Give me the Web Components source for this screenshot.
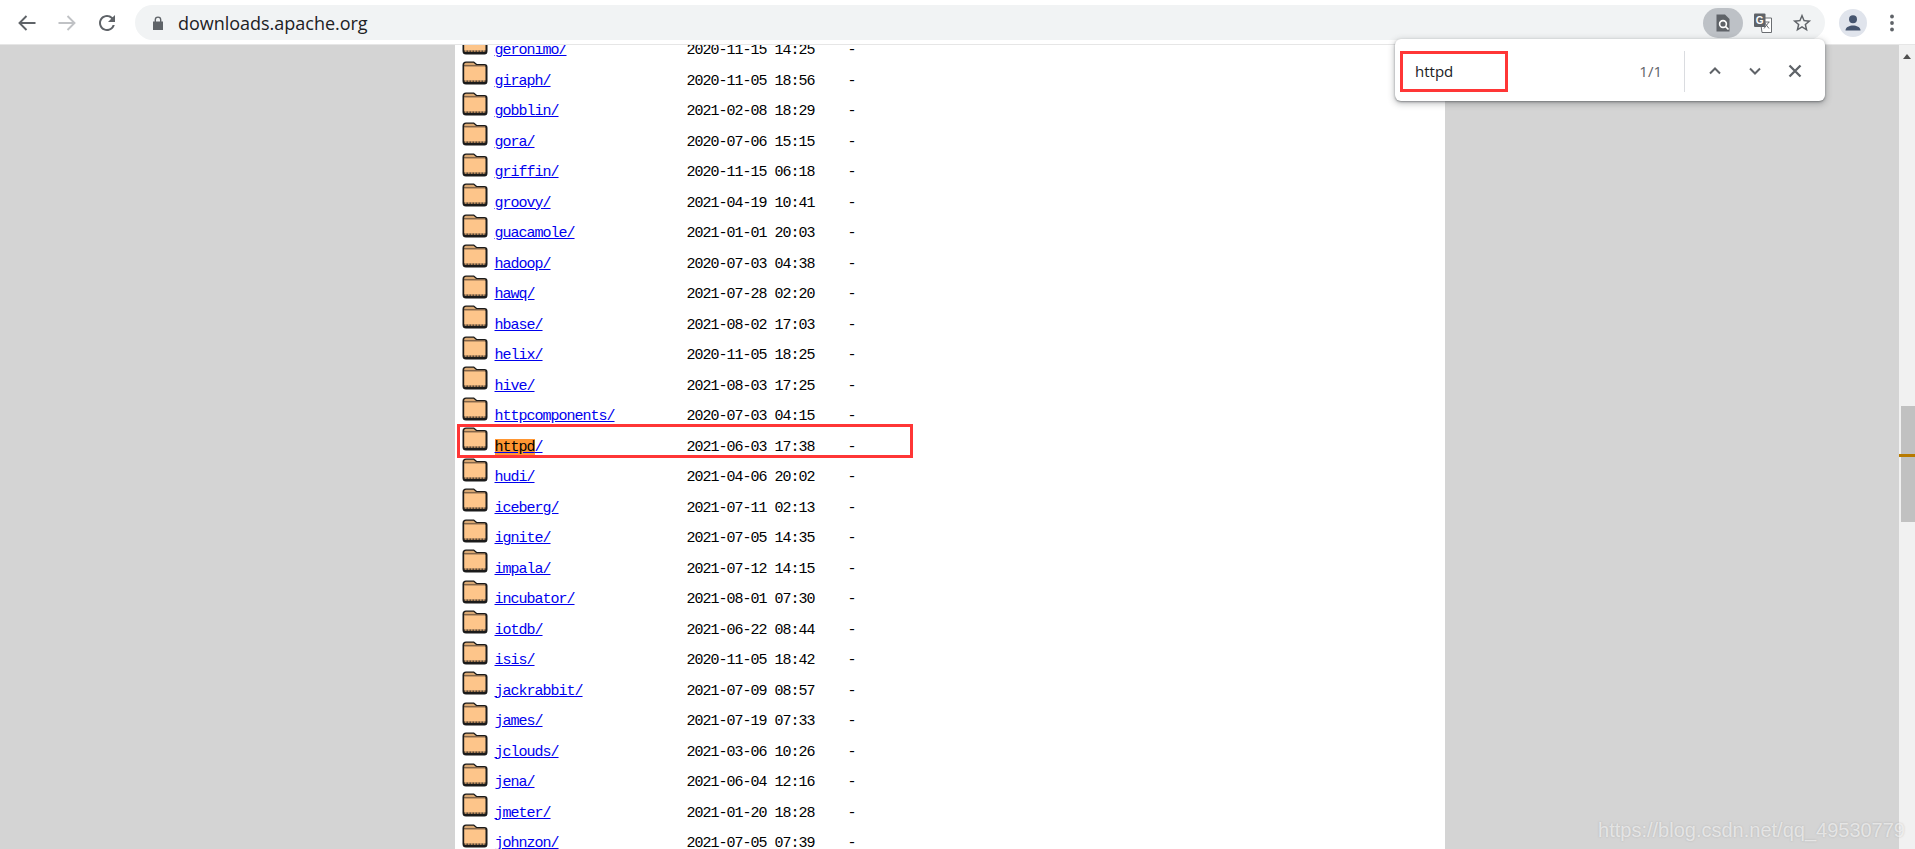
<!DOCTYPE html>
<html>
<head>
<meta charset="utf-8">
<title>downloads.apache.org</title>
<style>
  html, body { margin: 0; height: 100%; overflow: hidden; background: #d4d4d4; }
  body { font-family: "Open Sans", "Liberation Sans", sans-serif; }
</style>
</head>
<body>
<browser-window>
  <browser-toolbar slot="toolbar" url="downloads.apache.org"></browser-toolbar>
  <find-bar slot="overlay" query="httpd" count="1/1"></find-bar>
  <dir-listing slot="page">
    <dir-row name="geronimo/" date="2020-11-15 14:25"></dir-row>
    <dir-row name="giraph/" date="2020-11-05 18:56"></dir-row>
    <dir-row name="gobblin/" date="2021-02-08 18:29"></dir-row>
    <dir-row name="gora/" date="2020-07-06 15:15"></dir-row>
    <dir-row name="griffin/" date="2020-11-15 06:18"></dir-row>
    <dir-row name="groovy/" date="2021-04-19 10:41"></dir-row>
    <dir-row name="guacamole/" date="2021-01-01 20:03"></dir-row>
    <dir-row name="hadoop/" date="2020-07-03 04:38"></dir-row>
    <dir-row name="hawq/" date="2021-07-28 02:20"></dir-row>
    <dir-row name="hbase/" date="2021-08-02 17:03"></dir-row>
    <dir-row name="helix/" date="2020-11-05 18:25"></dir-row>
    <dir-row name="hive/" date="2021-08-03 17:25"></dir-row>
    <dir-row name="httpcomponents/" date="2020-07-03 04:15"></dir-row>
    <dir-row name="httpd/" match="httpd" boxed date="2021-06-03 17:38"></dir-row>
    <dir-row name="hudi/" date="2021-04-06 20:02"></dir-row>
    <dir-row name="iceberg/" date="2021-07-11 02:13"></dir-row>
    <dir-row name="ignite/" date="2021-07-05 14:35"></dir-row>
    <dir-row name="impala/" date="2021-07-12 14:15"></dir-row>
    <dir-row name="incubator/" date="2021-08-01 07:30"></dir-row>
    <dir-row name="iotdb/" date="2021-06-22 08:44"></dir-row>
    <dir-row name="isis/" date="2020-11-05 18:42"></dir-row>
    <dir-row name="jackrabbit/" date="2021-07-09 08:57"></dir-row>
    <dir-row name="james/" date="2021-07-19 07:33"></dir-row>
    <dir-row name="jclouds/" date="2021-03-06 10:26"></dir-row>
    <dir-row name="jena/" date="2021-06-04 12:16"></dir-row>
    <dir-row name="jmeter/" date="2021-01-20 18:28"></dir-row>
    <dir-row name="johnzon/" date="2021-07-05 07:39"></dir-row>
  </dir-listing>
  <page-scrollbar slot="scrollbar"></page-scrollbar>
  <span slot="overlay" class="mark">https://blog.csdn.net/qq_49530779</span>
</browser-window>

<script>
class BrowserWindow extends HTMLElement {
  constructor() {
    super();
    this.attachShadow({ mode: 'open' });
    this.shadowRoot.innerHTML = `
      <style>
        :host {
          display: grid;
          grid-template-rows: 45px 1fr;
          height: 849px;
          width: 1915px;
          position: relative;
          overflow: hidden;
        }
        .view {
          display: grid;
          grid-template-columns: 1fr 990px 1fr 16px;
          overflow: hidden;
          background: #d4d4d4;
        }
        .page { grid-column: 2; overflow: hidden; background: #fff; }
        .bar { grid-column: 4; }
        ::slotted(.mark) {
          position: absolute;
          right: 10px;
          bottom: 7px;
          font: 20px "Liberation Sans", Arial, sans-serif;
          color: rgba(255, 255, 255, .6);
          text-shadow: 0 0 2px rgba(130, 130, 130, .4);
        }
      </style>
      <slot name="toolbar"></slot>
      <div class="view">
        <div class="page"><slot name="page"></slot></div>
        <div class="bar"><slot name="scrollbar"></slot></div>
      </div>
      <slot name="overlay"></slot>
    `;
  }
}

class BrowserToolbar extends HTMLElement {
  constructor() {
    super();
    this.attachShadow({ mode: 'open' });
  }

  connectedCallback() {
    this.render();
  }

  render() {
    const url = this.getAttribute('url') || '';

    this.shadowRoot.innerHTML = `
      <style>
        :host {
          display: flex;
          height: 45px;
          box-sizing: border-box;
          padding: 5px 4px 0 7px;
          background: #fff;
          align-items: flex-start;
          border-bottom: 1px solid #e6e6e6;
        }
        .btn {
          flex: none;
          width: 40px;
          height: 35px;
          display: flex;
          align-items: center;
          justify-content: center;
        }
        .btn.thin { width: 38px; }
        .omni {
          flex: 1;
          height: 35px;
          margin: 0 8px;
          display: flex;
          align-items: center;
          background: #f1f3f4;
          border-radius: 18px;
          padding: 0 4px 0 15px;
          box-sizing: border-box;
        }
        .url {
          margin-left: 12px;
          font: 18px "Open Sans", "Liberation Sans", sans-serif;
          letter-spacing: -.02px;
          color: #202124;
        }
        .right { margin-left: auto; display: flex; align-items: center; }
        .pill {
          width: 40px;
          height: 30px;
          border-radius: 15px;
          background: #bdc1c6;
          display: flex;
          align-items: center;
          justify-content: center;
        }
        .avatar {
          width: 28px;
          height: 28px;
          border-radius: 50%;
          background: #e0e4ec;
          display: flex;
          align-items: center;
          justify-content: center;
        }
      </style>
      <div class="btn">
        <svg width="24" height="24" viewBox="0 0 24 24" fill="none" stroke="#5f6368" stroke-width="1.9"><path d="M20.5 12H4.5M11.5 5l-7 7 7 7"/></svg>
      </div>
      <div class="btn">
        <svg width="24" height="24" viewBox="0 0 24 24" fill="none" stroke="#c0c2c5" stroke-width="1.9"><path d="M3.5 12h16M12.5 5l7 7-7 7"/></svg>
      </div>
      <div class="btn">
        <svg width="24" height="24" viewBox="0 0 24 24" fill="#5f6368"><path d="M17.65 6.35A7.958 7.958 0 0 0 12 4c-4.42 0-7.99 3.58-7.99 8s3.57 8 7.99 8c3.73 0 6.84-2.55 7.73-6h-2.08A5.99 5.99 0 0 1 12 18c-3.31 0-6-2.69-6-6s2.69-6 6-6c1.66 0 3.14.69 4.22 1.78L13 11h7V4l-2.35 2.35z"/></svg>
      </div>
      <div class="omni">
        <svg width="16" height="16" viewBox="0 0 16 16" fill="#5f6368"><path d="M3 6.500h1.600V4.800a3.400 3.400 0 0 1 6.800 0v1.700H13V15H3zM6 6.500h4V4.800a2 2 0 0 0-4 0z" fill-rule="evenodd"/></svg>
        <span class="url">${url}</span>
        <div class="right">
          <div class="pill">
            <svg width="20" height="20" viewBox="0 0 20 20"><path d="M3.500 1.500h8.500l4.500 4.500v12.500h-13z" fill="#5f6368"/><circle cx="10" cy="11" r="3.400" fill="none" stroke="#fff" stroke-width="1.600"/><path d="M12.500 13.500l3 3" stroke="#fff" stroke-width="1.700"/></svg>
          </div>
          <div class="btn">
            <svg width="20" height="20" viewBox="0 0 20 20">
              <path d="M7 5h11.500v14.500H9z" fill="#fff" stroke="#6b6e72" stroke-width="1"/>
              <path d="M11 9l5 6.500M16 9l-5 6.500M10.500 9h6" stroke="#6b6e72" stroke-width="1" fill="none"/>
              <rect x="1" y="0.500" width="11.500" height="13.500" rx="1" fill="#5f6368"/>
              <text x="6.700" y="11" font-family="Liberation Sans, sans-serif" font-size="10" font-weight="700" fill="#fff" text-anchor="middle">G</text>
            </svg>
          </div>
          <div class="btn thin">
            <svg width="22" height="22" viewBox="0 0 24 24" fill="#5f6368"><path d="M22 9.240l-7.190-.620L12 2 9.190 8.630 2 9.240l5.460 4.730L5.820 21 12 17.270 18.180 21l-1.630-7.030L22 9.240zM12 15.400l-3.760 2.270 1-4.280-3.320-2.880 4.380-.380L12 6.100l1.710 4.040 4.380.380-3.320 2.880 1 4.280L12 15.400z"/></svg>
          </div>
        </div>
      </div>
      <div class="btn">
        <div class="avatar">
          <svg width="20" height="20" viewBox="0 0 20 20" fill="#46556f"><circle cx="10" cy="6.200" r="4"/><path d="M2.500 17.500c0-3.600 4.200-5 7.500-5s7.500 1.400 7.500 5z"/></svg>
        </div>
      </div>
      <div class="btn thin">
        <svg width="6" height="18" viewBox="0 0 6 18" fill="#5f6368"><circle cx="3" cy="2.500" r="1.900"/><circle cx="3" cy="9" r="1.900"/><circle cx="3" cy="15.500" r="1.900"/></svg>
      </div>
    `;
  }
}

class FindBar extends HTMLElement {
  constructor() {
    super();
    this.attachShadow({ mode: 'open' });
  }

  connectedCallback() {
    this.render();
  }

  render() {
    const query = this.getAttribute('query') || '';
    const count = this.getAttribute('count') || '';

    this.shadowRoot.innerHTML = `
      <style>
        :host {
          position: absolute;
          top: 39px;
          right: 90px;
          width: 430px;
          height: 62px;
          box-sizing: border-box;
          display: flex;
          align-items: center;
          padding: 2px 10px 0 5px;
          background: #fff;
          border-radius: 6px;
          box-shadow: 0 1px 2px rgba(60, 64, 67, .5), 0 2px 6px 1px rgba(60, 64, 67, .3);
          font: 15px "Open Sans", "Liberation Sans", sans-serif;
        }
        .query {
          width: 108px;
          height: 41px;
          box-sizing: border-box;
          border: 3px solid #ff3636;
          padding-left: 12px;
          line-height: 35px;
          color: #202124;
        }
        .count { margin-left: auto; margin-right: 1px; color: #5f6368; font-size: 15px; }
        .sep { width: 1px; height: 41px; background: #dadce0; margin: 0 10px 0 21px; }
        .btn {
          width: 40px;
          height: 36px;
          display: flex;
          align-items: center;
          justify-content: center;
        }
      </style>
      <div class="query">${query}</div>
      <div class="count">${count}</div>
      <div class="sep"></div>
      <div class="btn"><svg width="16" height="16" viewBox="0 0 16 16" fill="none" stroke="#5f6368" stroke-width="2"><path d="M3 10.500l5-5 5 5"/></svg></div>
      <div class="btn"><svg width="16" height="16" viewBox="0 0 16 16" fill="none" stroke="#5f6368" stroke-width="2"><path d="M3 5.500l5 5 5-5"/></svg></div>
      <div class="btn"><svg width="16" height="16" viewBox="0 0 16 16" fill="none" stroke="#5f6368" stroke-width="2.300"><path d="M2.500 2.500l11 11M13.500 2.500l-11 11"/></svg></div>
    `;
  }
}

class DirListing extends HTMLElement {
  constructor() {
    super();
    this.attachShadow({ mode: 'open' });
    this.shadowRoot.innerHTML = `
      <style>
        :host {
          display: block;
          margin-top: -15.5px;
          padding-left: 7px;
        }
      </style>
      <slot></slot>
    `;
  }
}

class FolderIcon extends HTMLElement {
  constructor() {
    super();
    this.attachShadow({ mode: 'open' });
    this.shadowRoot.innerHTML = `
      <style>
        :host { display: block; width: 26px; height: 24px; }
        svg { display: block; }
      </style>
      <svg width="26" height="24" viewBox="0 0 26 24">
        <path d="M4 .5h8l3 2.500h7.500q3 0 3 3V20q0 3.500-3 3.500H4q-3.500 0-3.500-3.500V4Q.5.500 4 .5z" fill="#1b1b1b"/>
        <path d="M4 1.800h7.500l2.600 2.300H2.200V3.500Q2.200 1.800 4 1.800z" fill="#d9a873"/>
        <path d="M2.200 5.200h20.600q.7 0 .7.7V19H2.200z" fill="#fdc58a"/>
        <path d="M2.200 4.400h21v1H2.200z" fill="#c9986a"/>
        <path d="M3 20h20" stroke="#c08a58" stroke-width="1.400" stroke-dasharray="1.500 1.500"/>
        <path d="M2.200 19h21.300v1.500H2.200z" fill="#fdc58a" opacity=".55"/>
      </svg>
    `;
  }
}

class DirRow extends HTMLElement {
  constructor() {
    super();
    this.attachShadow({ mode: 'open' });
  }

  connectedCallback() {
    this.render();
  }

  render() {
    const name = this.getAttribute('name') || '';
    const date = this.getAttribute('date') || '';
    const match = this.getAttribute('match') || '';
    const boxed = this.hasAttribute('boxed');
    const link = match && name.startsWith(match)
      ? `<mark>${match}</mark>${name.slice(match.length)}`
      : name;

    this.shadowRoot.innerHTML = `
      <style>
        :host {
          display: grid;
          grid-template-columns: 33px 192px 161px 1fr;
          height: 30.5px;
          position: relative;
          font: 15px/16px "Liberation Mono", "Courier New", monospace;
          letter-spacing: -1px;
          color: #000;
        }
        folder-icon { margin-top: 1px; }
        .cell { align-self: end; padding-bottom: 1px; white-space: pre; }
        a { color: #00e; text-decoration: underline; }
        mark { background: #ff9632; color: #000; }
        .box {
          position: absolute;
          left: -5px;
          top: -2px;
          width: 450px;
          height: 28px;
          border: 3px solid #ff3636;
        }
      </style>
      <folder-icon></folder-icon>
      <div class="cell"><a href="#">${link}</a></div>
      <div class="cell">${date}</div>
      <div class="cell">-</div>
      ${boxed ? '<div class="box"></div>' : ''}
    `;
  }
}

class PageScrollbar extends HTMLElement {
  constructor() {
    super();
    this.attachShadow({ mode: 'open' });
    this.shadowRoot.innerHTML = `
      <style>
        :host {
          display: block;
          height: 804px;
          position: relative;
          background: #f1f1f1;
          overflow: hidden;
        }
        .arrow {
          width: 0;
          margin: 9px 0 0 4px;
          border: 4px solid transparent;
          border-top: 0;
          border-bottom: 5px solid #505050;
        }
        .thumb {
          height: 116px;
          margin: 347px 0 0 2px;
          background: #c1c1c1;
        }
        .tick {
          position: absolute;
          top: 409px;
          left: 0;
          right: 0;
          height: 3px;
          background: #b87a00;
        }
      </style>
      <div class="arrow"></div>
      <div class="thumb"></div>
      <div class="tick"></div>
    `;
  }
}

customElements.define('browser-window', BrowserWindow);
customElements.define('browser-toolbar', BrowserToolbar);
customElements.define('find-bar', FindBar);
customElements.define('dir-listing', DirListing);
customElements.define('folder-icon', FolderIcon);
customElements.define('dir-row', DirRow);
customElements.define('page-scrollbar', PageScrollbar);
</script>
</body>
</html>
